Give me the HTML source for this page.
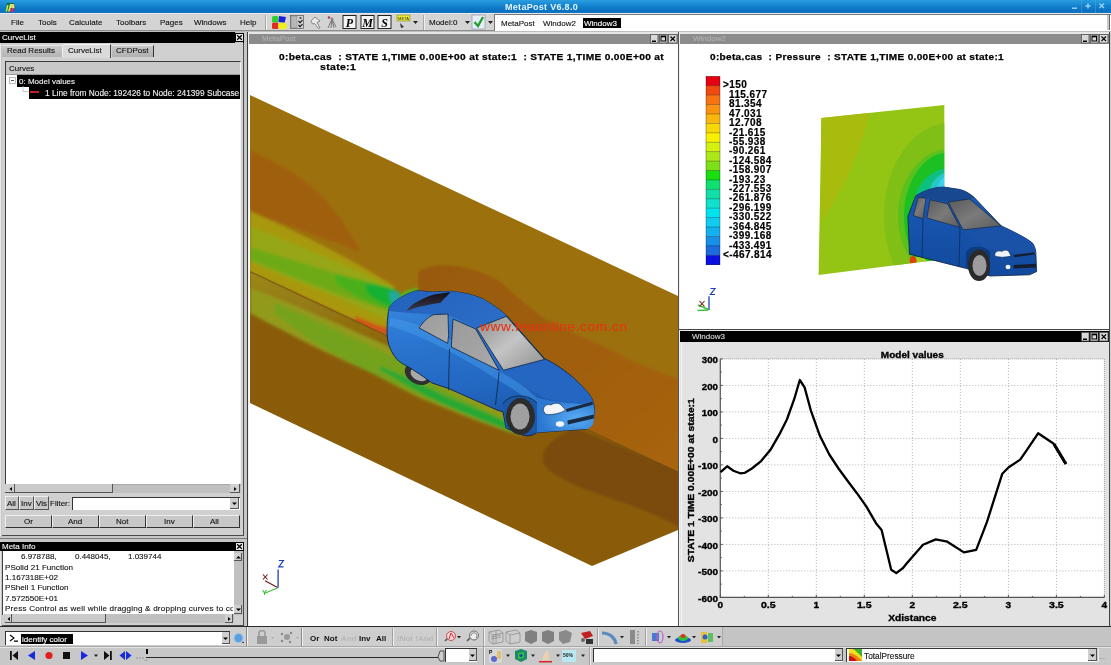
<!DOCTYPE html>
<html><head><meta charset="utf-8">
<style>
*{margin:0;padding:0;box-sizing:border-box}
html,body{width:1111px;height:665px;overflow:hidden;background:#c4c4c4;font-family:"Liberation Sans",sans-serif;font-size:8px;color:#000;position:relative}
.a{position:absolute}
.t{position:absolute;white-space:nowrap;line-height:1;will-change:transform}
svg{will-change:transform}
</style></head><body>
<div class="a" style="left:0px;top:0px;width:1111px;height:13px;background:linear-gradient(#2a9ee0,#1382cf 45%,#0a6fbf 85%,#0f78c4)"></div>
<svg class="a" style="left:4px;top:2px" width="12" height="11" viewBox="0 0 12 11"><path d="M1,10 L3,1 L10,1 L11,6 L9,10Z" fill="#1a6a40"/><path d="M1.5,9.5 L3,3 L4.5,3 L3.2,9.5Z" fill="#b0f070"/><path d="M4,9.5 L6,2 L8.5,2 L7,7 L5.5,9.5Z" fill="#d8f060"/><path d="M7,7 L8.5,2 L10,2 L10.5,6Z" fill="#f0e080"/><path d="M5.5,10 L7,7 L10.5,6 L9.5,10Z" fill="#c03080"/><path d="M6,6.5 L8,6 L7.5,8Z" fill="#a01010"/></svg>
<div class="t" style="left:504.6px;top:2.56px;font-size:9px;color:#e2f5ff;font-weight:bold;letter-spacing:0.3px;">MetaPost V6.8.0</div>
<svg class="a" style="left:1066px;top:0px" width="45" height="13" viewBox="0 0 45 13"><rect x="15" y="0" width="1" height="13" fill="#4aa8e0" opacity="0.5"/><rect x="29" y="0" width="1" height="13" fill="#4aa8e0" opacity="0.5"/><rect x="6" y="7.5" width="5" height="1.4" fill="#9cd4f6"/><path d="M22,3.5 L22,8.5 M19.5,6 L24.5,6" stroke="#9cd4f6" stroke-width="1.4"/><path d="M33.5,3.5 L38,8 M38,3.5 L33.5,8" stroke="#9cd4f6" stroke-width="1.2"/></svg>
<div class="a" style="left:0px;top:13px;width:1111px;height:18px;background:#d4d4d4"></div>
<div class="a" style="left:0px;top:13px;width:1111px;height:1px;background:#e8e8e8"></div>
<div class="a" style="left:0px;top:30px;width:1111px;height:1px;background:#8c8c8c"></div>
<div class="a" style="left:0px;top:31px;width:1111px;height:1px;background:#bdbdbd"></div>
<div class="t" style="left:11px;top:18.92px;font-size:8px;color:#111;-webkit-text-stroke:0.12px #111;">File</div>
<div class="t" style="left:38px;top:18.92px;font-size:8px;color:#111;-webkit-text-stroke:0.12px #111;">Tools</div>
<div class="t" style="left:69px;top:18.92px;font-size:8px;color:#111;-webkit-text-stroke:0.12px #111;">Calculate</div>
<div class="t" style="left:116px;top:18.92px;font-size:8px;color:#111;-webkit-text-stroke:0.12px #111;">Toolbars</div>
<div class="t" style="left:160px;top:18.92px;font-size:8px;color:#111;-webkit-text-stroke:0.12px #111;">Pages</div>
<div class="t" style="left:194px;top:18.92px;font-size:8px;color:#111;-webkit-text-stroke:0.12px #111;">Windows</div>
<div class="t" style="left:240px;top:18.92px;font-size:8px;color:#111;-webkit-text-stroke:0.12px #111;">Help</div>
<div class="a" style="left:265px;top:15px;width:1px;height:15px;background:#a8a8a8"></div>
<div class="a" style="left:266px;top:15px;width:1px;height:15px;background:#f0f0f0"></div>
<svg class="a" style="left:266px;top:13px" width="230" height="18" viewBox="266 13 230 18">
<rect x="272" y="16" width="6.5" height="6.5" rx="1.5" fill="#30d030"/>
<path d="M279,16 L286,17 L284.5,23 L278.5,22 Z" fill="#2020d8"/>
<rect x="272" y="22.5" width="6.5" height="6.5" rx="1.5" fill="#e03020"/>
<ellipse cx="282.5" cy="26" rx="4.5" ry="3.5" fill="#f0f020"/>
<rect x="290.5" y="15.5" width="13" height="13" fill="#d0d0d0" stroke="#555" stroke-width="0.7"/>
<rect x="291.5" y="16.5" width="5.5" height="11" fill="#b8b8b8" stroke="#888" stroke-width="0.5"/>
<circle cx="300.5" cy="18" r="1" fill="#333"/>
<path d="M298.5,21 l1.5,1.6 l2.5,-2.4 M298.5,25 l1.5,1.6 l2.5,-2.4" stroke="#111" stroke-width="1.1" fill="none"/>
<path d="M311,21 L315,17 L320,21 L317,22.5 L320,28 L318.5,28.5 L314.5,23.5 L312.5,24 Z" fill="#e8e8e8" stroke="#666" stroke-width="0.7"/>
<circle cx="329" cy="17.5" r="1.3" fill="#b04050"/>
<path d="M332,19 L328,28 M332,19 L331,28 M332,19 L334,28 M332,19 L336,27" stroke="#777" stroke-width="1" fill="none"/>
<circle cx="332" cy="19" r="1.5" fill="#888"/>
<rect x="343" y="15.5" width="13" height="13" fill="#f4f4f4" stroke="#222" stroke-width="1"/>
<rect x="361" y="15.5" width="13" height="13" fill="#f4f4f4" stroke="#222" stroke-width="1"/>
<rect x="378" y="15.5" width="13" height="13" fill="#f4f4f4" stroke="#222" stroke-width="1"/>
<text x="349.5" y="26.5" text-anchor="middle" font-family="Liberation Serif" font-style="italic" font-weight="bold" font-size="12">P</text>
<text x="367.5" y="26.5" text-anchor="middle" font-family="Liberation Serif" font-style="italic" font-weight="bold" font-size="12">M</text>
<text x="384.5" y="26.5" text-anchor="middle" font-family="Liberation Serif" font-style="italic" font-weight="bold" font-size="12">S</text>
<rect x="397" y="15" width="13" height="6" fill="#e8e830" stroke="#707020" stroke-width="0.5"/>
<text x="403.5" y="20" text-anchor="middle" font-family="Liberation Sans" font-size="4" fill="#333">META</text>
<path d="M400,23 L404,27 L401,28Z" fill="#333"/>
<path d="M413,21 L418,21 L415.5,24Z" fill="#222"/>
<path d="M465,21 L470,21 L467.5,24Z" fill="#222"/>
<rect x="472" y="15" width="13" height="14" fill="#e8eef8" stroke="#7a8aa0" stroke-width="0.6"/>
<path d="M474.5,22 L478,26 L483,17" stroke="#20a030" stroke-width="2.4" fill="none"/>
<path d="M488,21 L493,21 L490.5,24Z" fill="#222"/>
</svg>
<div class="a" style="left:423px;top:15px;width:1px;height:15px;background:#a8a8a8"></div>
<div class="a" style="left:424px;top:15px;width:1px;height:15px;background:#f0f0f0"></div>
<div class="t" style="left:429px;top:19.22px;font-size:8px;color:#111;-webkit-text-stroke:0.12px #111;">Model:0</div>
<div class="a" style="left:494px;top:14px;width:617px;height:17px;background:#fff;border-top:1px solid #777;border-left:1px solid #777"></div>
<div class="a" style="left:1107px;top:15px;width:3px;height:15px;background:#c8c8c8;border-right:1px solid #666"></div>
<div class="t" style="left:501px;top:19.72px;font-size:8px;color:#111;-webkit-text-stroke:0.12px #111;">MetaPost</div>
<div class="t" style="left:543px;top:19.72px;font-size:8px;color:#111;-webkit-text-stroke:0.12px #111;">Window2</div>
<div class="a" style="left:583px;top:17.5px;width:38px;height:10px;background:#000"></div>
<div class="t" style="left:584px;top:19.72px;font-size:8px;color:#fff;-webkit-text-stroke:0.12px #fff;">Window3</div>
<div class="a" style="left:0px;top:32px;width:247px;height:595px;background:#c6c6c6"></div>
<div class="a" style="left:0px;top:32px;width:1px;height:595px;background:#e8e8e8"></div>
<div class="a" style="left:0px;top:32px;width:235px;height:10.5px;background:#000"></div>
<div class="t" style="left:2px;top:33.62px;font-size:8px;color:#f4f4f4;-webkit-text-stroke:0.12px #f4f4f4;">CurveList</div>
<svg class="a" style="left:235px;top:33px" width="9" height="9" viewBox="0 0 9 9"><rect x="0.5" y="0.5" width="8" height="8" fill="#e8e8e8" stroke="#000"/><path d="M2.2,2.2 L6.8,6.8 M6.8,2.2 L2.2,6.8" stroke="#000" stroke-width="1.3"/></svg>
<div class="a" style="left:2px;top:42.5px;width:242px;height:493px;background:#d0d0d0;border-right:1px solid #4a4a4a;border-bottom:1px solid #4a4a4a"></div>
<div class="a" style="left:243px;top:33px;width:1px;height:10px;background:#000"></div>
<div class="a" style="left:2px;top:45px;width:61px;height:12px;background:linear-gradient(#cacaca,#b4b4b4);border-right:1px solid #f0f0f0;border-top:1px solid #e8e8e8"></div>
<div class="a" style="left:63px;top:43.5px;width:48px;height:14px;background:#dadada;border-right:1px solid #404040;border-top:1px solid #f4f4f4"></div>
<div class="a" style="left:112px;top:45px;width:42px;height:12px;background:linear-gradient(#c6c6c6,#b0b0b0);border-right:1px solid #303030;border-top:1px solid #e8e8e8"></div>
<div class="t" style="left:7px;top:47.02px;font-size:8px;color:#111;-webkit-text-stroke:0.12px #111;">Read Results</div>
<div class="t" style="left:68px;top:47.02px;font-size:8px;color:#111;-webkit-text-stroke:0.12px #111;">CurveList</div>
<div class="t" style="left:116px;top:47.02px;font-size:8px;color:#111;-webkit-text-stroke:0.12px #111;">CFDPost</div>
<div class="a" style="left:5px;top:61px;width:236px;height:424px;background:#fff;border-top:1px solid #3a3a3a;border-left:1px solid #3a3a3a;border-right:1px solid #f0f0f0"></div>
<div class="a" style="left:6px;top:62px;width:234px;height:13px;background:#c8c8c8;border-bottom:1px solid #9a9a9a"></div>
<div class="t" style="left:9px;top:65.02px;font-size:8px;color:#111;-webkit-text-stroke:0.12px #111;">Curves</div>
<div class="a" style="left:17px;top:75px;width:223px;height:11.5px;background:#000"></div>
<div class="t" style="left:19px;top:77.92px;font-size:8px;color:#f0f0f0;-webkit-text-stroke:0.12px #f0f0f0;">0: Model values</div>
<div class="a" style="left:29px;top:86.5px;width:211px;height:12px;background:#000"></div>
<div class="t" style="left:44.6px;top:89.09px;font-size:8.3px;color:#f0f0f0;-webkit-text-stroke:0.12px #f0f0f0;">1 Line from Node: 192426 to Node: 241399 Subcase</div>
<svg class="a" style="left:8px;top:76px" width="25" height="18" viewBox="8 76 25 18"><rect x="9.5" y="77.5" width="6" height="6" fill="#fff" stroke="#aaa" stroke-width="0.8"/><path d="M11,80.5 H14" stroke="#555" stroke-width="1"/><path d="M23,86 V91.5 H29" stroke="#bbb" stroke-width="0.8" fill="none"/></svg>
<div class="a" style="left:30px;top:91px;width:9px;height:1.6px;background:#c02020"></div>
<div class="a" style="left:5px;top:484px;width:236px;height:9px;background:#c0c0c0;border-top:1px solid #aaa"></div>
<div class="a" style="left:5px;top:484px;width:10px;height:9px;background:#d0d0d0;border-right:1px solid #555;border-bottom:1px solid #555"></div>
<svg class="a" style="left:8px;top:486px" width="6" height="6"><path d="M4,1 L1.5,3 L4,5Z" fill="#000"/></svg>
<div class="a" style="left:15px;top:484px;width:98px;height:9px;background:#cacaca;border-right:1px solid #555;border-bottom:1px solid #555"></div>
<div class="a" style="left:230px;top:484px;width:10px;height:9px;background:#d0d0d0;border-right:1px solid #555;border-bottom:1px solid #555"></div>
<svg class="a" style="left:232px;top:486px" width="6" height="6"><path d="M2,1 L4.5,3 L2,5Z" fill="#000"/></svg>
<div class="a" style="left:5px;top:496px;width:14px;height:14px;background:#c8c8c8;border-right:1px solid #555;border-bottom:1px solid #555;border-top:1px solid #eee;border-left:1px solid #eee"></div>
<div class="t" style="left:7px;top:500.22px;font-size:8px;color:#111;-webkit-text-stroke:0.12px #111;">All</div>
<div class="a" style="left:19px;top:496px;width:15px;height:14px;background:#c8c8c8;border-right:1px solid #555;border-bottom:1px solid #555;border-top:1px solid #eee;border-left:1px solid #eee"></div>
<div class="t" style="left:21px;top:500.22px;font-size:8px;color:#111;-webkit-text-stroke:0.12px #111;">Inv</div>
<div class="a" style="left:34px;top:496px;width:15px;height:14px;background:#c8c8c8;border-right:1px solid #555;border-bottom:1px solid #555;border-top:1px solid #eee;border-left:1px solid #eee"></div>
<div class="t" style="left:36px;top:500.22px;font-size:8px;color:#111;-webkit-text-stroke:0.12px #111;">Vis</div>
<div class="t" style="left:49.5px;top:500.22px;font-size:8px;color:#111;-webkit-text-stroke:0.12px #111;">Filter:</div>
<div class="a" style="left:72px;top:497px;width:168px;height:13px;background:#fff;border-top:1px solid #333;border-left:1px solid #333"></div>
<div class="a" style="left:230px;top:498px;width:9px;height:11px;background:#cfcfcf;border-right:1px solid #555;border-bottom:1px solid #555"></div>
<svg class="a" style="left:231px;top:500px" width="7" height="7"><path d="M1,2.5 L6,2.5 L3.5,5Z" fill="#000"/></svg>
<div class="a" style="left:5px;top:515px;width:47px;height:13px;background:#c8c8c8;border-right:1px solid #333;border-bottom:1px solid #333;border-top:1px solid #eee;border-left:1px solid #eee"></div>
<div class="t" style="left:23.5px;top:518.42px;font-size:8px;color:#111;-webkit-text-stroke:0.12px #111;">Or</div>
<div class="a" style="left:52px;top:515px;width:47px;height:13px;background:#c8c8c8;border-right:1px solid #333;border-bottom:1px solid #333;border-top:1px solid #eee;border-left:1px solid #eee"></div>
<div class="t" style="left:68px;top:518.42px;font-size:8px;color:#111;-webkit-text-stroke:0.12px #111;">And</div>
<div class="a" style="left:99px;top:515px;width:47px;height:13px;background:#c8c8c8;border-right:1px solid #333;border-bottom:1px solid #333;border-top:1px solid #eee;border-left:1px solid #eee"></div>
<div class="t" style="left:116px;top:518.42px;font-size:8px;color:#111;-webkit-text-stroke:0.12px #111;">Not</div>
<div class="a" style="left:146px;top:515px;width:47px;height:13px;background:#c8c8c8;border-right:1px solid #333;border-bottom:1px solid #333;border-top:1px solid #eee;border-left:1px solid #eee"></div>
<div class="t" style="left:163.5px;top:518.42px;font-size:8px;color:#111;-webkit-text-stroke:0.12px #111;">Inv</div>
<div class="a" style="left:193px;top:515px;width:47px;height:13px;background:#c8c8c8;border-right:1px solid #333;border-bottom:1px solid #333;border-top:1px solid #eee;border-left:1px solid #eee"></div>
<div class="t" style="left:210px;top:518.42px;font-size:8px;color:#111;-webkit-text-stroke:0.12px #111;">All</div>
<div class="a" style="left:0px;top:535.5px;width:247px;height:5px;background:#c6c6c6"></div>
<div class="a" style="left:0px;top:538px;width:247px;height:1px;background:#7a7a7a"></div>
<div class="a" style="left:0px;top:541.5px;width:235px;height:9.5px;background:#000"></div>
<div class="t" style="left:2px;top:542.92px;font-size:8px;color:#f4f4f4;-webkit-text-stroke:0.12px #f4f4f4;">Meta Info</div>
<svg class="a" style="left:235px;top:542px" width="9" height="9" viewBox="0 0 9 9"><rect x="0.5" y="0.5" width="8" height="8" fill="#e8e8e8" stroke="#000"/><path d="M2.2,2.2 L6.8,6.8 M6.8,2.2 L2.2,6.8" stroke="#000" stroke-width="1.3"/></svg>
<div class="a" style="left:2px;top:551px;width:242px;height:75px;background:#d0d0d0;border-right:1px solid #4a4a4a;border-bottom:1px solid #4a4a4a"></div>
<div class="a" style="left:2px;top:551px;width:232px;height:64px;background:#fff;border-left:1px solid #444"></div>
<div class="a" style="left:234px;top:551px;width:9px;height:64px;background:#c0c0c0"></div>
<div class="a" style="left:234px;top:553px;width:8px;height:8px;background:#d0d0d0;border-right:1px solid #555;border-bottom:1px solid #555"></div>
<svg class="a" style="left:235px;top:554px" width="7" height="7"><path d="M1,4.5 L6,4.5 L3.5,2Z" fill="#000"/></svg>
<div class="a" style="left:234px;top:605px;width:8px;height:9px;background:#d0d0d0;border-right:1px solid #555;border-bottom:1px solid #555"></div>
<svg class="a" style="left:235px;top:606px" width="7" height="7"><path d="M1,2.5 L6,2.5 L3.5,5Z" fill="#000"/></svg>
<div class="t" style="left:21px;top:552.92px;font-size:8px;color:#111;-webkit-text-stroke:0.12px #111;">6.978788,</div>
<div class="t" style="left:74.6px;top:552.92px;font-size:8px;color:#111;-webkit-text-stroke:0.12px #111;">0.448045,</div>
<div class="t" style="left:128px;top:552.92px;font-size:8px;color:#111;-webkit-text-stroke:0.12px #111;">1.039744</div>
<div class="t" style="left:5px;top:563.74px;font-size:8.1px;color:#111;-webkit-text-stroke:0.12px #111;">PSolid 21 Function</div>
<div class="t" style="left:5px;top:574.09px;font-size:8.1px;color:#111;-webkit-text-stroke:0.12px #111;">1.167318E+02</div>
<div class="t" style="left:5px;top:584.44px;font-size:8.1px;color:#111;-webkit-text-stroke:0.12px #111;">PShell 1 Function</div>
<div class="t" style="left:5px;top:594.79px;font-size:8.1px;color:#111;-webkit-text-stroke:0.12px #111;">7.572550E+01</div>
<div class="a" style="left:4px;top:600px;width:229px;height:14px;overflow:hidden">
<div class="t" style="left:1px;top:4.64px;font-size:8.1px;color:#111;letter-spacing:0.2px;-webkit-text-stroke:0.12px #111;">Press Control as well while dragging &amp; dropping curves to combine</div>
</div>
<div class="a" style="left:4px;top:614px;width:230px;height:9px;background:#c0c0c0"></div>
<div class="a" style="left:5px;top:614px;width:7px;height:9px;background:#d0d0d0;border-right:1px solid #555;border-bottom:1px solid #555"></div>
<svg class="a" style="left:6px;top:616px" width="6" height="6"><path d="M4,1 L1.5,3 L4,5Z" fill="#000"/></svg>
<div class="a" style="left:12px;top:614px;width:94px;height:9px;background:#cacaca;border-right:1px solid #555;border-bottom:1px solid #555"></div>
<div class="a" style="left:225px;top:614px;width:8px;height:9px;background:#d0d0d0;border-right:1px solid #555;border-bottom:1px solid #555"></div>
<svg class="a" style="left:226px;top:616px" width="6" height="6"><path d="M2,1 L4.5,3 L2,5Z" fill="#000"/></svg>
<div class="a" style="left:247px;top:32px;width:433px;height:595px;background:#cfcfcf"></div>
<div class="a" style="left:247px;top:32px;width:1px;height:595px;background:#3a3a3a"></div>
<div class="a" style="left:248px;top:32px;width:1px;height:595px;background:#f0f0f0"></div>
<div class="a" style="left:678px;top:32px;width:1px;height:595px;background:#555"></div>
<div class="a" style="left:249px;top:32px;width:429px;height:2px;background:#e6e6e6"></div>
<div class="a" style="left:249px;top:34px;width:429px;height:10px;background:#8c8c8c"></div>
<div class="t" style="left:262px;top:35.42px;font-size:8px;color:#b0b0b0;-webkit-text-stroke:0.12px #b0b0b0;">MetaPost</div>
<svg class="a" style="left:650px;top:34px" width="28" height="10" viewBox="0 0 28 10"><rect x="0.5" y="0.5" width="7.5" height="8.5" fill="#d8d8d8" stroke="#555" stroke-width="0.8"/><rect x="2" y="6.5" width="4" height="1.5" fill="#000"/><rect x="9.5" y="0.5" width="7.5" height="8.5" fill="#d8d8d8" stroke="#555" stroke-width="0.8"/><rect x="11" y="2" width="4.5" height="5" fill="none" stroke="#000" stroke-width="1"/><rect x="11" y="2" width="4.5" height="1.3" fill="#000"/><rect x="18.5" y="0.5" width="8.5" height="8.5" fill="#d8d8d8" stroke="#555" stroke-width="0.8"/><path d="M20.5,2.5 L25,7 M25,2.5 L20.5,7" stroke="#000" stroke-width="1.1"/></svg>
<div class="a" style="left:249px;top:44px;width:429px;height:582px;background:#fff"></div>
<svg class="a" style="left:250px;top:44px" width="428" height="582" viewBox="250 44 428 582">
<defs>
<clipPath id="cpUp"><polygon points="250,94.9 678,296 678,472 250,271.5"/></clipPath>
<clipPath id="cpDn"><polygon points="250,271.5 678,472 678,530 592,566 250,403"/></clipPath>
<filter id="bl2" x="-20%" y="-20%" width="140%" height="140%"><feGaussianBlur stdDeviation="1.6"/></filter>
<filter id="bl1" x="-20%" y="-20%" width="140%" height="140%"><feGaussianBlur stdDeviation="0.8"/></filter>
<linearGradient id="orgG" x1="0" y1="0" x2="1" y2="1"><stop offset="0" stop-color="#985a0c"/><stop offset="0.6" stop-color="#a2600c"/><stop offset="1" stop-color="#a8640a"/></linearGradient>
<filter id="bl3" x="-20%" y="-20%" width="140%" height="140%"><feGaussianBlur stdDeviation="3"/></filter>
<linearGradient id="carSide" x1="0" y1="0" x2="0" y2="1"><stop offset="0" stop-color="#3a8ae0"/><stop offset="0.35" stop-color="#2a74cc"/><stop offset="0.8" stop-color="#2064bc"/><stop offset="1" stop-color="#1650a0"/></linearGradient>
<linearGradient id="glass" x1="0" y1="0" x2="1" y2="1"><stop offset="0" stop-color="#8a8a8a"/><stop offset="0.55" stop-color="#b8b8b8"/><stop offset="1" stop-color="#8c8c8c"/></linearGradient>
<linearGradient id="hoodG" x1="0" y1="0" x2="1" y2="1"><stop offset="0" stop-color="#2262be"/><stop offset="0.7" stop-color="#2a6ecc"/><stop offset="1" stop-color="#4a9cec"/></linearGradient>
<linearGradient id="ridgeG" x1="0" y1="0" x2="0" y2="1"><stop offset="0" stop-color="#9c8a18"/><stop offset="1" stop-color="#8a620c"/></linearGradient>
</defs>
<!-- upper face -->
<polygon points="250,94.9 678,296 678,472 250,271.5" fill="#9d700e"/>
<g clip-path="url(#cpUp)">
 <g filter="url(#bl2)">
  <path d="M250,150 C270,160 286,168 300,178 C325,195 345,222 361,252 C330,240 290,225 250,213 Z" fill="#a05e0a"/>
  
  
  
  <path d="M250,211 C300,233 350,258 394,286 L392,336 L250,272 Z" fill="#a89810"/>
  <path d="M250,226 C300,246 350,266 394,288 L392,322 C350,302 300,284 250,262 Z" fill="#96a612"/>
  <path d="M250,247 C300,262 350,278 394,290 L394,312 C350,300 300,280 250,260 Z" fill="#6eaa14"/>
  <path d="M335,274 C360,280 380,284 396,290 L396,312 C375,306 355,296 335,283 Z" fill="#48b01c"/>
  <path d="M366,284 C378,284 390,288 398,292 L398,308 C386,306 374,300 366,291 Z" fill="#12b030"/>
  <path d="M300,291 C330,306 360,320 390,331 L390,336 L300,294 Z" fill="#b09c10"/>
  <path d="M355,316 C370,322 380,326 391,329 L391,336 C375,333 364,329 355,324 Z" fill="#d05412"/>
 </g>

 <path d="M398,296 C405,290 415,287 430,286.5 C445,286 458,287 470,290 L468,295 C455,292 440,291 425,292 C412,294 404,297 400,301 Z" fill="#58b41a" filter="url(#bl1)"/>
 <path d="M388,292 C392,290 396,291 400,293 L398,318 C394,312 390,300 388,292 Z" fill="#20a8a0" filter="url(#bl2)"/>
 <path d="M418,272 C425,266 440,264 456,266 C470,268 488,274 499,281 C510,290 525,305 541,316 C555,324 565,330 580,336 C600,344 615,352 630,360 C645,366 660,372 680,380 L680,480 L560,420 L520,330 L460,300 L418,292 Z" fill="url(#orgG)" filter="url(#bl1)"/>
</g>
<!-- lower face -->
<polygon points="250,271.5 678,472 678,530 592,566 250,403" fill="#8a5c0a"/>
<g clip-path="url(#cpDn)">
 <g filter="url(#bl2)">
  <path d="M250,271 L392,338 L392,352 C340,330 290,310 250,292 Z" fill="url(#ridgeG)"/>
  <path d="M250,288 C290,302 340,325 392,348 C410,358 425,366 436,372 C460,384 490,398 505,405 L522,436 C500,430 470,418 420,398 C400,388 385,380 370,372 C330,355 290,335 250,313 Z" fill="#929a1a"/>
  <path d="M275,303 C310,318 350,336 400,360 C415,370 425,380 436,385 C460,398 490,412 512,422 L518,434 C490,425 460,412 420,396 C390,382 360,368 330,352 C310,340 290,325 275,314 Z" fill="#74a21a"/>
  <path d="M380,366 C400,374 425,386 450,398 C480,410 500,418 510,424 L514,432 C490,424 460,412 430,398 C410,388 395,378 380,370 Z" fill="#28a832"/>
 </g>
 <path d="M575,428 C555,436 538,450 544,464 C552,478 590,492 630,505 C650,512 665,520 680,527 L680,471 Z" fill="#7a4c0a" filter="url(#bl1)"/>
</g>
<line x1="250" y1="271.5" x2="678" y2="472" stroke="#5a3c08" stroke-width="0.6"/>
<g id="car1">
  <defs>
  <linearGradient id="sideG" x1="0" y1="0" x2="0.25" y2="1"><stop offset="0" stop-color="#3c8ce2"/><stop offset="0.3" stop-color="#2c78d2"/><stop offset="0.75" stop-color="#2266c0"/><stop offset="1" stop-color="#1a54a6"/></linearGradient>
  <linearGradient id="roofG" x1="0" y1="0" x2="1" y2="0.5"><stop offset="0" stop-color="#2462bc"/><stop offset="1" stop-color="#2a6cc6"/></linearGradient>
  <linearGradient id="glassW" x1="0" y1="0" x2="1" y2="1"><stop offset="0" stop-color="#8c8c8c"/><stop offset="0.5" stop-color="#c4c4c4"/><stop offset="1" stop-color="#909090"/></linearGradient>
  <linearGradient id="glassS" x1="0" y1="0" x2="1" y2="1"><stop offset="0" stop-color="#9a9a9a"/><stop offset="1" stop-color="#aaaaaa"/></linearGradient>
  <linearGradient id="spoG" x1="0" y1="0" x2="0" y2="1"><stop offset="0" stop-color="#141018"/><stop offset="1" stop-color="#3a3848"/></linearGradient>
  <radialGradient id="frontG" cx="0.7" cy="0.6" r="0.6"><stop offset="0" stop-color="#5aacf4"/><stop offset="1" stop-color="#2a78d0"/></radialGradient>
  </defs>
  <!-- rear wheel -->
  <ellipse cx="418" cy="374" rx="14" ry="10" fill="#303030" transform="rotate(28 418 374)"/>
  <ellipse cx="419" cy="374.5" rx="9" ry="6" fill="#a8a8a8" transform="rotate(28 419 374.5)"/>
  <!-- body silhouette -->
  <path d="M389.4,307 C395,300 405,294 416.5,290.7 C422,291 428,291.8 433,292 L450.5,291.3 C458,292 463,293 468,293.9 C476,296 482,298 487,301.4 C495,306 500,310 506.3,315.3 L544.5,358.5 C560,366 576,378 589,394 C593,399 595,406 594.5,414 C594,421 591,427 586,429 L537,432.5 C533,436 526,437 520,434 L506,428 L503,412 L497,410 L448.6,388.5 L432,383 C424,377 414,370 405,365 C401,363 399,361 397,359.5 C391,352 388,345 387.2,336 C386.8,325 387.5,315 389,309 Z" fill="url(#sideG)" stroke="#0e2240" stroke-width="0.9"/>
  <!-- roof / trunk top -->
  <path d="M389.4,307 C395,300 405,294 416.5,290.7 C422,291 428,291.8 433,292 L450.5,291.3 C458,292 463,293 468,293.9 C476,296 482,298 487,301.4 C495,306 500,310 506.3,315.3 L476.5,328 C465,322 455,318 450,316 L434,314.5 C420,314 405,313 389.4,311 Z" fill="url(#roofG)"/>
  <!-- hood -->
  <path d="M503.5,370.2 L544.5,359.4 C560,367 576,378 589,394 C592,398 593,401 593.5,404 C580,404 560,402 545,398 C530,390 515,380 503.5,370.2 Z" fill="#2466c2"/>
  <!-- front bumper highlight -->
  <path d="M537,398 C555,402 575,404 593.5,404 C595,410 595,418 593,424 C591,428 588,429 586,429 L537,432.5 C532,420 532,406 537,398 Z" fill="url(#frontG)"/>
  <!-- shoulder highlight -->
  <path d="M390,318 C420,322 460,340 500,372 C520,382 530,392 537,398 L534,404 C520,394 505,384 495,378 C460,356 420,334 389,326 Z" fill="#48a0ee" opacity="0.45"/>
  <!-- spoiler -->
  <path d="M406.4,310.9 C410,306 414,303 417.8,301.4 C424,298 429,296 434,294.5 L450.5,292 C447,296 444,299 440.5,302.7 C432,304 425,305.5 417.8,307 Z" fill="url(#spoG)"/>
  <!-- windows -->
  <path d="M419,327.9 C424,321 429,316 434,314.6 L448,314 L448.6,335.4 L447.7,343.3 Z" fill="url(#glassS)" stroke="#0e2240" stroke-width="0.8"/>
  <path d="M453,319 L475.6,328.9 L499.1,370.4 L451.3,347 Z" fill="url(#glassS)" stroke="#0e2240" stroke-width="0.8"/>
  <path d="M476.5,328 L506.3,316.3 L544.5,359.4 L503.5,370.2 Z" fill="url(#glassW)" stroke="#0e2240" stroke-width="0.8"/>
  <!-- door lines -->
  <path d="M449.5,348.8 C449,365 448.8,378 448.6,390.2" fill="none" stroke="#0e2240" stroke-width="0.8"/>
  <path d="M499,372 C498,385 496.5,395 495.5,405" fill="none" stroke="#0e2240" stroke-width="0.8"/>
  <!-- front wheel arch + wheel -->
  <path d="M503,404 C508,394 528,393 537,403 L537,433 L506,428 Z" fill="#1c58a8"/><path d="M503,404 C508,394 528,393 537,403" fill="none" stroke="#0e2240" stroke-width="0.8"/>
  <ellipse cx="520.5" cy="416.5" rx="14.5" ry="18.5" fill="#2c2c2c"/>
  <ellipse cx="520" cy="416.5" rx="9.5" ry="13" fill="#a0a0a0"/>
  <!-- lights -->
  <path d="M543.4,411 C543,406 547,403.5 551,405 C554,402.5 560,402.5 562,406 L565.5,410 C560,414 550,415 546,414.5 Z" fill="#f2f6fa" stroke="#0e2240" stroke-width="0.6"/>
  <path d="M566,409 L592.3,401.7 L592.8,404.7 L566.5,412 Z" fill="#1a2a40"/>
  <path d="M567.4,420.5 L593.8,414.5 L593.8,418.5 L567.9,424.5 Z" fill="#1a2a40"/>
  <ellipse cx="560" cy="424" rx="4.2" ry="2.8" fill="#f2f6fa"/>
</g>

</svg>

<div class="t" style="left:278.8px;top:52.88px;font-size:9.1px;color:#000;font-weight:bold;letter-spacing:0.3px;-webkit-text-stroke:0.25px #000;;transform-origin:0 0;transform:scaleX(1.1160)">0:beta.cas&nbsp; : STATE 1,TIME 0.00E+00 at state:1&nbsp; : STATE 1,TIME 0.00E+00 at</div>
<div class="t" style="left:320.2px;top:63.18px;font-size:9.1px;color:#000;font-weight:bold;letter-spacing:0.3px;-webkit-text-stroke:0.25px #000;;transform-origin:0 0;transform:scaleX(1.1489)">state:1</div>
<div class="t" style="left:480px;top:320.02px;font-size:13px;color:#e63414;letter-spacing:0.5px;-webkit-text-stroke:0.12px #e63414;;transform-origin:0 0;transform:scaleX(1.0593)">www.feaonline.com.cn</div>
<svg class="a" style="left:258px;top:556px" width="30" height="42" viewBox="258 556 30 42">
<path d="M278.1,569.5 V587.8" stroke="#2040b0" stroke-width="1.3"/>
<path d="M278.8,560.5 h4.6 l-4.6,6.3 h4.8" stroke="#2040b0" stroke-width="1.2" fill="none"/>
<path d="M277.5,587.5 L265,580.8" stroke="#701818" stroke-width="1.2"/>
<path d="M263,574.5 l4.5,5 M267.5,574.5 l-4.5,5" stroke="#701818" stroke-width="1.1"/>
<path d="M277.5,588 L264,593.5" stroke="#40c040" stroke-width="1.2"/>
<path d="M262.5,590 l2,3 l2,-3 M264.5,593 v2" stroke="#40c040" stroke-width="1.1" fill="none"/>
</svg>
<div class="a" style="left:679px;top:32px;width:432px;height:298px;background:#cfcfcf"></div>
<div class="a" style="left:679px;top:32px;width:1px;height:298px;background:#f0f0f0"></div>
<div class="a" style="left:1109px;top:32px;width:1px;height:298px;background:#444"></div>
<div class="a" style="left:680px;top:32px;width:429px;height:2px;background:#e6e6e6"></div>
<div class="a" style="left:680px;top:34px;width:429px;height:10px;background:#8c8c8c"></div>
<div class="t" style="left:693px;top:35.42px;font-size:8px;color:#b0b0b0;-webkit-text-stroke:0.12px #b0b0b0;">Window2</div>
<svg class="a" style="left:1081px;top:34px" width="28" height="10" viewBox="0 0 28 10"><rect x="0.5" y="0.5" width="7.5" height="8.5" fill="#d8d8d8" stroke="#555" stroke-width="0.8"/><rect x="2" y="6.5" width="4" height="1.5" fill="#000"/><rect x="9.5" y="0.5" width="7.5" height="8.5" fill="#d8d8d8" stroke="#555" stroke-width="0.8"/><rect x="11" y="2" width="4.5" height="5" fill="none" stroke="#000" stroke-width="1"/><rect x="11" y="2" width="4.5" height="1.3" fill="#000"/><rect x="18.5" y="0.5" width="8.5" height="8.5" fill="#d8d8d8" stroke="#555" stroke-width="0.8"/><path d="M20.5,2.5 L25,7 M25,2.5 L20.5,7" stroke="#000" stroke-width="1.1"/></svg>
<div class="a" style="left:680px;top:44px;width:429px;height:285px;background:#fff"></div>
<svg class="a" style="left:681px;top:44px" width="427" height="285" viewBox="681 44 427 285">
<defs>
<clipPath id="cpW2"><polygon points="821.4,117.9 944.3,105 944.3,259 818.6,275"/></clipPath>
<filter id="bl2b" x="-10%" y="-10%" width="120%" height="120%"><feGaussianBlur stdDeviation="0.5"/></filter>
<linearGradient id="glass2" x1="0" y1="0" x2="1" y2="1"><stop offset="0" stop-color="#5a5a5a"/><stop offset="0.5" stop-color="#7a7a7a"/><stop offset="1" stop-color="#5c5c5c"/></linearGradient>
<linearGradient id="carSide2" x1="0" y1="0" x2="0" y2="1"><stop offset="0" stop-color="#1a5ab8"/><stop offset="1" stop-color="#124a9c"/></linearGradient>
</defs>
<polygon points="821.4,117.9 944.3,105 944.3,259 818.6,275" fill="#94c414"/>
<g clip-path="url(#cpW2)" filter="url(#bl2b)">
  <path d="M821,100 L872,100 C865,140 850,180 821,222 Z" fill="#a8bc10"/>
  <ellipse cx="950" cy="216" rx="66" ry="93" fill="#80c018"/>
  <ellipse cx="950" cy="216" rx="52" ry="67" fill="#5cc01c"/>
  <ellipse cx="950" cy="216" rx="46" ry="64" fill="#1cc024"/>
  <ellipse cx="950" cy="214" rx="38" ry="46" fill="#10c080"/>
  <ellipse cx="950" cy="200" rx="22" ry="28" fill="#28c8c8"/>
  <ellipse cx="948" cy="190" rx="10" ry="14" fill="#40d0f0"/>
  <ellipse cx="918" cy="262" rx="9" ry="5" fill="#a0d020"/><ellipse cx="913" cy="261" rx="3.5" ry="5" fill="#e04010"/>
</g>
<g id="car2">
  <path d="M915.8,195.8 C925,190 935,187 944.2,187.1 L960,189.5 C966,191 970,194 974.2,197.4 L1001.1,225.8 C1012,231 1025,237 1032.7,243.2 C1035,247 1036,251 1035.9,254.2 L1036.6,271.6 L1029.5,274.8 L990,276 L966.4,268.5 L909.5,254.2 L907.9,216.3 Z" fill="url(#carSide2)" stroke="#0a1e3c" stroke-width="0.8"/>
  <path d="M915.8,195.8 C925,190 935,187 944.2,187.1 L960,189.5 C966,191 970,194 974.2,197.4 L969.5,199 L948.2,202.1 L918,197 Z" fill="#184890"/>
  <path d="M963.2,229.8 L1001.1,225.8 C1012,231 1025,237 1032.7,243.2 C1035,247 1036,251 1035.9,254.2 C1020,254 1000,252 985,248 C975,240 968,235 963.2,229.8 Z" fill="#1a52a8"/>
  <path d="M913.4,215.5 L918.2,197.4 L926,198.2 L923,218.7 Z" fill="url(#glass2)" stroke="#0a1e3c" stroke-width="0.6"/>
  <path d="M926.9,217.9 L930,199.7 L947.4,203.7 L960,227.4 Z" fill="url(#glass2)" stroke="#0a1e3c" stroke-width="0.6"/>
  <path d="M948.2,202.1 L969.5,199 L1001.1,225.8 L963.2,229.8 Z" fill="url(#glass2)" stroke="#0a1e3c" stroke-width="0.6"/>
  <path d="M923,219 L922,258" stroke="#0a1e3c" stroke-width="0.6" fill="none"/>
  <path d="M960,228 L959,266" stroke="#0a1e3c" stroke-width="0.6" fill="none"/>
  <path d="M966,252 C970,245 985,245 990,252 L990,276 L966,268 Z" fill="#0e3a80"/>
  <ellipse cx="979" cy="265.3" rx="11" ry="15.8" fill="#2a2a2a"/>
  <ellipse cx="979.5" cy="265.5" rx="7" ry="10.5" fill="#9c9c9c"/>
  <path d="M995,256 C994,252 998,250 1002,251.5 C1004,249.5 1008,250 1009,252 L1011,256 C1005,257.5 999,257.5 995,256 Z" fill="#f0f4f8" stroke="#0a1e3c" stroke-width="0.5"/>
  <path d="M1013.7,255 L1034.3,252.2 L1034.5,254.5 L1014,257.3 Z" fill="#141e30"/>
  <path d="M1013.7,265 L1035.9,263.8 L1035.9,267.5 L1013.7,268.5 Z" fill="#141e30"/>
  <ellipse cx="1008" cy="267" rx="2.5" ry="2.2" fill="#eef2f6"/>
</g>
</svg>

<div class="t" style="left:709.5px;top:52.78px;font-size:9.1px;color:#000;font-weight:bold;letter-spacing:0.3px;-webkit-text-stroke:0.25px #000;;transform-origin:0 0;transform:scaleX(1.1032)">0:beta.cas&nbsp; : Pressure&nbsp; : STATE 1,TIME 0.00E+00 at state:1</div>
<svg class="a" style="left:705px;top:75px" width="17" height="191" viewBox="705 75 17 191"><rect x="706" y="76.30" width="14" height="9.6" fill="#e40012"/><rect x="706" y="85.72" width="14" height="9.6" fill="#f04a12"/><rect x="706" y="85.32" width="14" height="0.8" fill="#000" opacity="0.35"/><rect x="706" y="95.14" width="14" height="9.6" fill="#f87412"/><rect x="706" y="94.74" width="14" height="0.8" fill="#000" opacity="0.35"/><rect x="706" y="104.56" width="14" height="9.6" fill="#f89412"/><rect x="706" y="104.16" width="14" height="0.8" fill="#000" opacity="0.35"/><rect x="706" y="113.98" width="14" height="9.6" fill="#f8b810"/><rect x="706" y="113.58" width="14" height="0.8" fill="#000" opacity="0.35"/><rect x="706" y="123.40" width="14" height="9.6" fill="#f8d808"/><rect x="706" y="123.00" width="14" height="0.8" fill="#000" opacity="0.35"/><rect x="706" y="132.82" width="14" height="9.6" fill="#f8f000"/><rect x="706" y="132.42" width="14" height="0.8" fill="#000" opacity="0.35"/><rect x="706" y="142.24" width="14" height="9.6" fill="#d4f010"/><rect x="706" y="141.84" width="14" height="0.8" fill="#000" opacity="0.35"/><rect x="706" y="151.66" width="14" height="9.6" fill="#ace818"/><rect x="706" y="151.26" width="14" height="0.8" fill="#000" opacity="0.35"/><rect x="706" y="161.08" width="14" height="9.6" fill="#80e018"/><rect x="706" y="160.68" width="14" height="0.8" fill="#000" opacity="0.35"/><rect x="706" y="170.50" width="14" height="9.6" fill="#18e010"/><rect x="706" y="170.10" width="14" height="0.8" fill="#000" opacity="0.35"/><rect x="706" y="179.92" width="14" height="9.6" fill="#10e070"/><rect x="706" y="179.52" width="14" height="0.8" fill="#000" opacity="0.35"/><rect x="706" y="189.34" width="14" height="9.6" fill="#10e0a8"/><rect x="706" y="188.94" width="14" height="0.8" fill="#000" opacity="0.35"/><rect x="706" y="198.76" width="14" height="9.6" fill="#10e0cc"/><rect x="706" y="198.36" width="14" height="0.8" fill="#000" opacity="0.35"/><rect x="706" y="208.18" width="14" height="9.6" fill="#00e4f0"/><rect x="706" y="207.78" width="14" height="0.8" fill="#000" opacity="0.35"/><rect x="706" y="217.60" width="14" height="9.6" fill="#10ccf0"/><rect x="706" y="217.20" width="14" height="0.8" fill="#000" opacity="0.35"/><rect x="706" y="227.02" width="14" height="9.6" fill="#14b0f0"/><rect x="706" y="226.62" width="14" height="0.8" fill="#000" opacity="0.35"/><rect x="706" y="236.44" width="14" height="9.6" fill="#1890e8"/><rect x="706" y="236.04" width="14" height="0.8" fill="#000" opacity="0.35"/><rect x="706" y="245.86" width="14" height="9.6" fill="#1c6ce0"/><rect x="706" y="245.46" width="14" height="0.8" fill="#000" opacity="0.35"/><rect x="706" y="255.28" width="14" height="9.6" fill="#0a10e0"/><rect x="706" y="254.88" width="14" height="0.8" fill="#000" opacity="0.35"/><rect x="706" y="76.3" width="14" height="188.4" fill="none" stroke="#000" stroke-width="0.6" opacity="0.5"/></svg>
<div class="t" style="left:722.5px;top:80.40px;font-size:10px;color:#000;font-weight:bold;letter-spacing:0.4px;-webkit-text-stroke:0.2px #000;">&gt;150</div>
<div class="t" style="left:728.6px;top:89.82px;font-size:10px;color:#000;font-weight:bold;letter-spacing:0.4px;-webkit-text-stroke:0.2px #000;">115.677</div>
<div class="t" style="left:728.6px;top:99.24px;font-size:10px;color:#000;font-weight:bold;letter-spacing:0.4px;-webkit-text-stroke:0.2px #000;">81.354</div>
<div class="t" style="left:728.6px;top:108.66px;font-size:10px;color:#000;font-weight:bold;letter-spacing:0.4px;-webkit-text-stroke:0.2px #000;">47.031</div>
<div class="t" style="left:728.6px;top:118.08px;font-size:10px;color:#000;font-weight:bold;letter-spacing:0.4px;-webkit-text-stroke:0.2px #000;">12.708</div>
<div class="t" style="left:728.6px;top:127.50px;font-size:10px;color:#000;font-weight:bold;letter-spacing:0.4px;-webkit-text-stroke:0.2px #000;">-21.615</div>
<div class="t" style="left:728.6px;top:136.92px;font-size:10px;color:#000;font-weight:bold;letter-spacing:0.4px;-webkit-text-stroke:0.2px #000;">-55.938</div>
<div class="t" style="left:728.6px;top:146.34px;font-size:10px;color:#000;font-weight:bold;letter-spacing:0.4px;-webkit-text-stroke:0.2px #000;">-90.261</div>
<div class="t" style="left:728.6px;top:155.76px;font-size:10px;color:#000;font-weight:bold;letter-spacing:0.4px;-webkit-text-stroke:0.2px #000;">-124.584</div>
<div class="t" style="left:728.6px;top:165.18px;font-size:10px;color:#000;font-weight:bold;letter-spacing:0.4px;-webkit-text-stroke:0.2px #000;">-158.907</div>
<div class="t" style="left:728.6px;top:174.60px;font-size:10px;color:#000;font-weight:bold;letter-spacing:0.4px;-webkit-text-stroke:0.2px #000;">-193.23</div>
<div class="t" style="left:728.6px;top:184.02px;font-size:10px;color:#000;font-weight:bold;letter-spacing:0.4px;-webkit-text-stroke:0.2px #000;">-227.553</div>
<div class="t" style="left:728.6px;top:193.44px;font-size:10px;color:#000;font-weight:bold;letter-spacing:0.4px;-webkit-text-stroke:0.2px #000;">-261.876</div>
<div class="t" style="left:728.6px;top:202.86px;font-size:10px;color:#000;font-weight:bold;letter-spacing:0.4px;-webkit-text-stroke:0.2px #000;">-296.199</div>
<div class="t" style="left:728.6px;top:212.28px;font-size:10px;color:#000;font-weight:bold;letter-spacing:0.4px;-webkit-text-stroke:0.2px #000;">-330.522</div>
<div class="t" style="left:728.6px;top:221.70px;font-size:10px;color:#000;font-weight:bold;letter-spacing:0.4px;-webkit-text-stroke:0.2px #000;">-364.845</div>
<div class="t" style="left:728.6px;top:231.12px;font-size:10px;color:#000;font-weight:bold;letter-spacing:0.4px;-webkit-text-stroke:0.2px #000;">-399.168</div>
<div class="t" style="left:728.6px;top:240.54px;font-size:10px;color:#000;font-weight:bold;letter-spacing:0.4px;-webkit-text-stroke:0.2px #000;">-433.491</div>
<div class="t" style="left:722.5px;top:249.96px;font-size:10px;color:#000;font-weight:bold;letter-spacing:0.4px;-webkit-text-stroke:0.2px #000;">&lt;-467.814</div>
<svg class="a" style="left:694px;top:286px" width="24" height="28" viewBox="694 286 24 28">
<path d="M709,296.3 V310" stroke="#2040b0" stroke-width="1.3"/>
<path d="M710.5,288.5 h4.5 l-4.5,6 h4.6" stroke="#2040b0" stroke-width="1.2" fill="none"/>
<path d="M708.5,309.5 L698,305" stroke="#40c040" stroke-width="1.6"/>
<path d="M699.5,301 l5,5.5 M704.5,301 l-5,5.5" stroke="#701818" stroke-width="1.1"/>
<path d="M708.5,310 L697.5,310.5" stroke="#40c040" stroke-width="1.5"/>
</svg>
<div class="a" style="left:679px;top:329px;width:432px;height:298px;background:#cfcfcf"></div>
<div class="a" style="left:679px;top:329px;width:431px;height:1px;background:#444"></div>
<div class="a" style="left:679px;top:330px;width:1px;height:297px;background:#f0f0f0"></div>
<div class="a" style="left:1109px;top:330px;width:1px;height:297px;background:#444"></div>
<div class="a" style="left:680px;top:330px;width:429px;height:1px;background:#e8e8e8"></div>
<div class="a" style="left:680px;top:331px;width:429px;height:11px;background:#000"></div>
<div class="t" style="left:692px;top:333.42px;font-size:8px;color:#dcdcdc;-webkit-text-stroke:0.12px #dcdcdc;">Window3</div>
<svg class="a" style="left:1081px;top:332px" width="28" height="10" viewBox="0 0 28 10"><rect x="0.5" y="0.5" width="7.5" height="8.5" fill="#d8d8d8" stroke="#555" stroke-width="0.8"/><rect x="2" y="6.5" width="4" height="1.5" fill="#000"/><rect x="9.5" y="0.5" width="7.5" height="8.5" fill="#d8d8d8" stroke="#555" stroke-width="0.8"/><rect x="11" y="2" width="4.5" height="5" fill="none" stroke="#000" stroke-width="1"/><rect x="11" y="2" width="4.5" height="1.3" fill="#000"/><rect x="18.5" y="0.5" width="8.5" height="8.5" fill="#d8d8d8" stroke="#555" stroke-width="0.8"/><path d="M20.5,2.5 L25,7 M25,2.5 L20.5,7" stroke="#000" stroke-width="1.1"/></svg>
<div class="a" style="left:680px;top:342px;width:429px;height:285px;background:#e3e3e3"></div>
<div class="a" style="left:681px;top:342px;width:1px;height:285px;background:#f4f4f4"></div>
<svg class="a" style="left:682px;top:342px" width="426" height="285" viewBox="682 342 426 285">
<rect x="720.3" y="358.9" width="384.0799999999999" height="238.5" fill="#fff"/>
<path d="M768.3,358.9V597.4 M816.3,358.9V597.4 M864.3,358.9V597.4 M912.3,358.9V597.4 M960.3,358.9V597.4 M1008.4,358.9V597.4 M1056.4,358.9V597.4 M720.3,385.4H1104.4 M720.3,411.9H1104.4 M720.3,438.4H1104.4 M720.3,464.9H1104.4 M720.3,491.4H1104.4 M720.3,517.9H1104.4 M720.3,544.4H1104.4 M720.3,570.9H1104.4" stroke="#b0b0b0" stroke-width="1" stroke-dasharray="1,2" fill="none"/>
<path d="M720.3,358.9H1104.4V597.4" stroke="#999" stroke-width="1" stroke-dasharray="1,1" fill="none"/>
<path d="M720.3,358.9V597.4H1104.4" stroke="#555" stroke-width="1.2" fill="none"/>
<path d="M720.3,597.4v-2.5 M744.3,597.4v-1.5 M768.3,597.4v-2.5 M792.3,597.4v-1.5 M816.3,597.4v-2.5 M840.3,597.4v-1.5 M864.3,597.4v-2.5 M888.3,597.4v-1.5 M912.3,597.4v-2.5 M936.3,597.4v-1.5 M960.3,597.4v-2.5 M984.4,597.4v-1.5 M1008.4,597.4v-2.5 M1032.4,597.4v-1.5 M1056.4,597.4v-2.5 M1080.4,597.4v-1.5 M1104.4,597.4v-2.5 M720.3,358.9h2.5 M720.3,372.1h1.5 M720.3,385.4h2.5 M720.3,398.6h1.5 M720.3,411.9h2.5 M720.3,425.1h1.5 M720.3,438.4h2.5 M720.3,451.6h1.5 M720.3,464.9h2.5 M720.3,478.1h1.5 M720.3,491.4h2.5 M720.3,504.6h1.5 M720.3,517.9h2.5 M720.3,531.1h1.5 M720.3,544.4h2.5 M720.3,557.6h1.5 M720.3,570.9h2.5 M720.3,584.1h1.5 M720.3,597.4h2.5" stroke="#555" stroke-width="1" fill="none"/>
<path d="M720.5,472.2 L727.2,466.3 L733.4,470.7 L740.1,473.3 L744.5,472.9 L751.9,468.5 L761.1,461.1 L770.3,450.1 L779.5,434.2 L786.9,419.5 L794.2,399.2 L799.8,380 L804.6,387.4 L810.8,410.3 L820,436.1 L829.3,454.5 L838.5,468.5 L847.7,481 L856.9,493.2 L866.1,506.1 L876.4,523.8 L881.6,530 L891.2,569.8 L896.3,573.1 L903,568 L906.4,563.7 L923,544.7 L935.8,539.4 L947.3,541.7 L963.9,552.4 L976.2,549.9 L986.9,522.2 L1002.3,473.7 L1008.7,467.3 L1020.2,459.6 L1027.8,448.6 L1038.1,433.3 L1053.4,443.5 L1065.7,464" stroke="#000" stroke-width="2.3" fill="none" stroke-linejoin="round"/>
<path d="M1054,444 L1066,464" stroke="#000" stroke-width="3" fill="none"/>
<text x="718" y="363.2" text-anchor="end" font-family="Liberation Sans" font-weight="bold" font-size="9.3" stroke="#000" stroke-width="0.35" textLength="16.2" lengthAdjust="spacingAndGlyphs">300</text>
<text x="718" y="389.7" text-anchor="end" font-family="Liberation Sans" font-weight="bold" font-size="9.3" stroke="#000" stroke-width="0.35" textLength="16.2" lengthAdjust="spacingAndGlyphs">200</text>
<text x="718" y="416.2" text-anchor="end" font-family="Liberation Sans" font-weight="bold" font-size="9.3" stroke="#000" stroke-width="0.35" textLength="16.2" lengthAdjust="spacingAndGlyphs">100</text>
<text x="718" y="442.7" text-anchor="end" font-family="Liberation Sans" font-weight="bold" font-size="9.3" stroke="#000" stroke-width="0.35" textLength="5.5" lengthAdjust="spacingAndGlyphs">0</text>
<text x="718" y="469.2" text-anchor="end" font-family="Liberation Sans" font-weight="bold" font-size="9.3" stroke="#000" stroke-width="0.35" textLength="19.9" lengthAdjust="spacingAndGlyphs">-100</text>
<text x="718" y="495.7" text-anchor="end" font-family="Liberation Sans" font-weight="bold" font-size="9.3" stroke="#000" stroke-width="0.35" textLength="19.9" lengthAdjust="spacingAndGlyphs">-200</text>
<text x="718" y="522.2" text-anchor="end" font-family="Liberation Sans" font-weight="bold" font-size="9.3" stroke="#000" stroke-width="0.35" textLength="19.9" lengthAdjust="spacingAndGlyphs">-300</text>
<text x="718" y="548.7" text-anchor="end" font-family="Liberation Sans" font-weight="bold" font-size="9.3" stroke="#000" stroke-width="0.35" textLength="19.9" lengthAdjust="spacingAndGlyphs">-400</text>
<text x="718" y="575.2" text-anchor="end" font-family="Liberation Sans" font-weight="bold" font-size="9.3" stroke="#000" stroke-width="0.35" textLength="19.9" lengthAdjust="spacingAndGlyphs">-500</text>
<text x="718" y="601.7" text-anchor="end" font-family="Liberation Sans" font-weight="bold" font-size="9.3" stroke="#000" stroke-width="0.35" textLength="19.9" lengthAdjust="spacingAndGlyphs">-600</text>
<text x="720.3" y="608.2" text-anchor="middle" font-family="Liberation Sans" font-weight="bold" font-size="9.3" stroke="#000" stroke-width="0.35" textLength="5.6" lengthAdjust="spacingAndGlyphs">0</text>
<text x="768.3" y="608.2" text-anchor="middle" font-family="Liberation Sans" font-weight="bold" font-size="9.3" stroke="#000" stroke-width="0.35" textLength="14.7" lengthAdjust="spacingAndGlyphs">0.5</text>
<text x="816.3" y="608.2" text-anchor="middle" font-family="Liberation Sans" font-weight="bold" font-size="9.3" stroke="#000" stroke-width="0.35" textLength="5.6" lengthAdjust="spacingAndGlyphs">1</text>
<text x="864.3" y="608.2" text-anchor="middle" font-family="Liberation Sans" font-weight="bold" font-size="9.3" stroke="#000" stroke-width="0.35" textLength="14.7" lengthAdjust="spacingAndGlyphs">1.5</text>
<text x="912.3" y="608.2" text-anchor="middle" font-family="Liberation Sans" font-weight="bold" font-size="9.3" stroke="#000" stroke-width="0.35" textLength="5.6" lengthAdjust="spacingAndGlyphs">2</text>
<text x="960.3" y="608.2" text-anchor="middle" font-family="Liberation Sans" font-weight="bold" font-size="9.3" stroke="#000" stroke-width="0.35" textLength="14.7" lengthAdjust="spacingAndGlyphs">2.5</text>
<text x="1008.4" y="608.2" text-anchor="middle" font-family="Liberation Sans" font-weight="bold" font-size="9.3" stroke="#000" stroke-width="0.35" textLength="5.6" lengthAdjust="spacingAndGlyphs">3</text>
<text x="1056.4" y="608.2" text-anchor="middle" font-family="Liberation Sans" font-weight="bold" font-size="9.3" stroke="#000" stroke-width="0.35" textLength="14.7" lengthAdjust="spacingAndGlyphs">3.5</text>
<text x="1104.4" y="608.2" text-anchor="middle" font-family="Liberation Sans" font-weight="bold" font-size="9.3" stroke="#000" stroke-width="0.35" textLength="5.6" lengthAdjust="spacingAndGlyphs">4</text>
<text x="912.3" y="357.8" text-anchor="middle" font-family="Liberation Sans" font-weight="bold" font-size="9.3" stroke="#000" stroke-width="0.35" textLength="62.9" lengthAdjust="spacingAndGlyphs">Model values</text>
<text x="912.3" y="621.3" text-anchor="middle" font-family="Liberation Sans" font-weight="bold" font-size="9.3" stroke="#000" stroke-width="0.35" textLength="48.2" lengthAdjust="spacingAndGlyphs">Xdistance</text>
<text transform="translate(694.3,480.2) rotate(-90)" text-anchor="middle" font-family="Liberation Sans" font-weight="bold" font-size="9.3" stroke="#000" stroke-width="0.35" textLength="164" lengthAdjust="spacingAndGlyphs">STATE 1 TIME 0.00E+00 at state:1</text>
</svg>
<div class="a" style="left:0px;top:626px;width:1111px;height:39px;background:#c4c4c4"></div>
<div class="a" style="left:0px;top:626px;width:1111px;height:1px;background:#2a2a2a"></div>
<div class="a" style="left:0px;top:627px;width:722px;height:19px;background:#cecece"></div>
<div class="a" style="left:0px;top:646px;width:1111px;height:19px;background:#c8c8c8"></div>
<div class="a" style="left:5px;top:631px;width:225px;height:14px;background:#fff;border-top:1px solid #333;border-left:1px solid #333"></div>
<svg class="a" style="left:9px;top:634px" width="10" height="9"><path d="M1,1 L5,4 L1,7" stroke="#000" stroke-width="1.1" fill="none"/><rect x="5" y="6.5" width="4" height="1.3" fill="#000"/></svg>
<div class="a" style="left:21px;top:633.5px;width:52px;height:10px;background:#000"></div>
<div class="t" style="left:22px;top:635.62px;font-size:8px;color:#fff;-webkit-text-stroke:0.12px #fff;">identify color</div>
<div class="a" style="left:222px;top:632px;width:8px;height:12px;background:#cfcfcf;border-right:1px solid #555;border-bottom:1px solid #555"></div>
<svg class="a" style="left:222px;top:635px" width="7" height="7"><path d="M1,2.5 L6,2.5 L3.5,5Z" fill="#000"/></svg>
<svg class="a" style="left:232px;top:632px" width="14" height="13"><circle cx="6.5" cy="6" r="4.5" fill="#5aa0e0" stroke="#a0c4f0" stroke-width="1"/><path d="M10,11 L12,11 L11,9.5Z" fill="#000"/></svg>
<div class="a" style="left:246px;top:627px;width:1px;height:19px;background:#8a8a8a"></div>
<div class="a" style="left:247px;top:627px;width:1px;height:19px;background:#f0f0f0"></div>
<svg class="a" style="left:250px;top:628px" width="250" height="18" viewBox="250 628 250 18">
<rect x="257" y="636" width="10" height="8" fill="#9a9a9a"/><path d="M259,636 V633 C259,630 265,630 265,633 V636" stroke="#9a9a9a" stroke-width="1.6" fill="none"/>
<path d="M271,637 L274,637 L272.5,639Z" fill="#aaa"/>
<circle cx="287" cy="637" r="3" fill="#9a9a9a"/><circle cx="282" cy="634" r="1.2" fill="#888"/><circle cx="291" cy="633" r="1.2" fill="#888"/><circle cx="282" cy="641" r="1.2" fill="#888"/><circle cx="290" cy="642" r="1.2" fill="#888"/>
<path d="M296,637 L299,637 L297.5,639Z" fill="#aaa"/>
<path d="M445,641 L448,638" stroke="#555" stroke-width="1.6"/><circle cx="451" cy="636" r="4.5" fill="#f4d8d8" stroke="#c05050" stroke-width="1"/><path d="M449,639 L451,633 L454,638" stroke="#d03030" stroke-width="1" fill="none"/>
<path d="M457,636 L461,636 L459,638.5Z" fill="#222"/>
<path d="M467,641 L470,638" stroke="#555" stroke-width="1.6"/><circle cx="474" cy="635.5" r="4.5" fill="#eee" stroke="#666" stroke-width="1"/><path d="M471,636 A3,3 0 1 1 476,638" stroke="#666" stroke-width="0.8" fill="none"/>
</svg>
<div class="a" style="left:301px;top:628px;width:1px;height:18px;background:#8a8a8a"></div>
<div class="a" style="left:302px;top:628px;width:1px;height:18px;background:#f0f0f0"></div>
<div class="t" style="left:310px;top:634.92px;font-size:8px;color:#111;font-weight:bold;">Or</div>
<div class="t" style="left:324px;top:634.92px;font-size:8px;color:#111;font-weight:bold;">Not</div>
<div class="t" style="left:341px;top:634.92px;font-size:8px;color:#b8b8b8;font-weight:bold;">And</div>
<div class="t" style="left:359px;top:634.92px;font-size:8px;color:#111;font-weight:bold;">Inv</div>
<div class="t" style="left:376px;top:634.92px;font-size:8px;color:#111;font-weight:bold;">All</div>
<div class="a" style="left:392px;top:628px;width:1px;height:18px;background:#a0a0a0"></div>
<div class="a" style="left:393px;top:628px;width:1px;height:18px;background:#f0f0f0"></div>
<div class="t" style="left:397px;top:634.92px;font-size:8px;color:#b8b8b8;font-weight:bold;">!Not !And</div>
<div class="a" style="left:436px;top:628px;width:1px;height:18px;background:#a0a0a0"></div>
<div class="a" style="left:437px;top:628px;width:1px;height:18px;background:#f0f0f0"></div>
<div class="a" style="left:483px;top:628px;width:1px;height:18px;background:#a0a0a0"></div>
<div class="a" style="left:484px;top:628px;width:1px;height:18px;background:#f0f0f0"></div>
<svg class="a" style="left:486px;top:628px" width="240" height="18" viewBox="486 628 240 18">
<g fill="none" stroke="#888" stroke-width="0.7">
<path d="M489,632 L499,630 L503,633 L503,642 L493,644 L489,641 Z M489,632 L493,635 L503,633 M493,635 L493,644 M491,637 L501,635 M491,639 L501,637 M496,631 L496,643"/>
<path d="M506,632 L516,630 L520,633 L520,642 L510,644 L506,641 Z M506,632 L510,635 L520,633 M510,635 L510,644"/>
</g>
<path d="M525,632 L531,630 L537,632 L537,641 L531,644 L525,641 Z" fill="#808080"/>
<path d="M542,632 L548,630 L554,632 L554,641 L548,644 L542,641 Z" fill="#808080"/>
<path d="M559,632 L566,630 L572,633 L570,642 L563,644 L559,640 Z" fill="#8a8a8a"/>
<path d="M581,633 L590,631 L593,636 L585,639 Z" fill="#c02020"/><rect x="586" y="639" width="7" height="5" fill="#333"/><circle cx="583" cy="640" r="2" fill="#666"/>
<path d="M602,633 C610,633 615,638 616,644" stroke="#5a8ac0" stroke-width="3.2" fill="none"/>
<path d="M620,636 L624,636 L622,638.5Z" fill="#222"/>
<rect x="630" y="630" width="5" height="14" fill="#8a8a8a"/><path d="M638,631 V644" stroke="#666" stroke-width="1" stroke-dasharray="1.5,1.5"/>
<rect x="652" y="633" width="7" height="8" fill="#4a7ad0"/><ellipse cx="660" cy="637" rx="3" ry="6" fill="none" stroke="#c060c0" stroke-width="1.2"/>
<path d="M667,636 L671,636 L669,638.5Z" fill="#222"/>
<ellipse cx="683" cy="640" rx="8" ry="3" fill="#2050d0"/><ellipse cx="683" cy="638" rx="5" ry="3" fill="#30c040"/><ellipse cx="683" cy="636" rx="2.5" ry="2" fill="#e03020"/>
<path d="M692,636 L696,636 L694,638.5Z" fill="#222"/>
<rect x="701" y="632" width="6" height="11" fill="#e8c040"/><circle cx="705" cy="637" r="2.5" fill="#3060c0"/><rect x="708" y="633" width="5" height="9" fill="#60c060"/>
<path d="M717,636 L721,636 L719,638.5Z" fill="#222"/>
</svg>
<div class="a" style="left:597px;top:628px;width:1px;height:18px;background:#a0a0a0"></div>
<div class="a" style="left:598px;top:628px;width:1px;height:18px;background:#f0f0f0"></div>
<div class="a" style="left:645px;top:628px;width:1px;height:18px;background:#a0a0a0"></div>
<div class="a" style="left:646px;top:628px;width:1px;height:18px;background:#f0f0f0"></div>
<div class="a" style="left:722px;top:627px;width:1px;height:19px;background:#a8a8a8"></div>
<div class="a" style="left:0px;top:645.5px;width:1111px;height:1px;background:#a8a8a8"></div>
<div class="a" style="left:0px;top:646.5px;width:1111px;height:1px;background:#e4e4e4"></div>
<svg class="a" style="left:0px;top:647px" width="490" height="18" viewBox="0 647 490 18">
<rect x="10" y="651" width="1.8" height="9" fill="#111"/><path d="M18,651 L12.5,655.5 L18,660Z" fill="#111"/>
<path d="M35,651 L28,655.5 L35,660Z" fill="#1a2ae0"/>
<circle cx="49" cy="655.5" r="3.6" fill="#e02020"/>
<rect x="63" y="652" width="7" height="7" fill="#111"/>
<path d="M81,651 L88,655.5 L81,660Z" fill="#1a2ae0"/>
<path d="M94,654.5 L98,654.5 L96,657Z" fill="#222"/>
<path d="M104,651 L109.5,655.5 L104,660Z" fill="#111"/><rect x="110" y="651" width="1.8" height="9" fill="#111"/>
<path d="M125,651 L119.5,655.5 L125,660Z M126,651 L131.5,655.5 L126,660Z" fill="#1a2ae0"/>
<path d="M136,658 h2 M139,658 h2 M142,658 h2" stroke="#888" stroke-width="0.8"/>
<rect x="146" y="649" width="2" height="5" fill="#000"/>
<path d="M146,657.5 H440" stroke="#2a2a2a" stroke-width="1.2"/>
<path d="M146,659 L148,661 L144,661Z" fill="#aaa"/>
<path d="M440,651 L444,651 L444,661 L440,661 L438,657Z" fill="#ccc" stroke="#333" stroke-width="0.8"/>
</svg>
<div class="a" style="left:445px;top:648px;width:32px;height:14px;background:#fff;border-top:1px solid #333;border-left:1px solid #333"></div>
<div class="a" style="left:469px;top:649px;width:8px;height:12px;background:#cfcfcf;border-right:1px solid #555;border-bottom:1px solid #555"></div>
<svg class="a" style="left:469px;top:652px" width="7" height="7"><path d="M1,2.5 L6,2.5 L3.5,5Z" fill="#000"/></svg>
<div class="a" style="left:483px;top:647px;width:1px;height:18px;background:#a0a0a0"></div>
<div class="a" style="left:484px;top:647px;width:1px;height:18px;background:#f0f0f0"></div>
<svg class="a" style="left:486px;top:647px" width="106" height="18" viewBox="486 647 106 18">
<rect x="489" y="649" width="13" height="14" rx="2" fill="#d8d8d8"/><text x="489" y="654" font-size="5" font-family="Liberation Sans" font-weight="bold">P</text><circle cx="494" cy="659" r="3" fill="#5a6ad0"/><rect x="497" y="651" width="4" height="8" fill="#e0c070"/>
<path d="M506,654.5 L510,654.5 L508,657Z" fill="#222"/>
<path d="M515,651 L521,649 L527,651 L527,659 L521,662 L515,659Z" fill="#1a8a6a"/><path d="M518,653 L524,652 L524,658 L518,659Z" fill="#30c040"/><circle cx="521" cy="655.5" r="1.6" fill="#2040c0"/>
<path d="M531,654.5 L535,654.5 L533,657Z" fill="#222"/>
<path d="M542,660 C543,655 546,651 547,650 C548,651 549,656 550,660Z" fill="#e8d0b0"/><rect x="539" y="661" width="13" height="1.5" fill="#e02020"/>
<path d="M556,654.5 L560,654.5 L558,657Z" fill="#222"/>
<rect x="562" y="650" width="14" height="12" fill="#b8e8f0"/><text x="563" y="657" font-size="5" font-family="Liberation Sans" font-weight="bold" fill="#222">50%</text>
<path d="M581,654.5 L585,654.5 L583,657Z" fill="#222"/>
</svg>
<div class="a" style="left:589px;top:647px;width:1px;height:18px;background:#a0a0a0"></div>
<div class="a" style="left:590px;top:647px;width:1px;height:18px;background:#f0f0f0"></div>
<div class="a" style="left:593px;top:648px;width:250px;height:14px;background:#fff;border-top:1px solid #333;border-left:1px solid #333"></div>
<div class="a" style="left:835px;top:649px;width:8px;height:12px;background:#cfcfcf;border-right:1px solid #555;border-bottom:1px solid #555"></div>
<svg class="a" style="left:835px;top:652px" width="7" height="7"><path d="M1,2.5 L6,2.5 L3.5,5Z" fill="#000"/></svg>
<div class="a" style="left:846px;top:648px;width:251px;height:14px;background:#fff;border-top:1px solid #333;border-left:1px solid #333"></div>
<svg class="a" style="left:849px;top:649px" width="13" height="12" viewBox="0 0 13 12"><rect width="13" height="12" fill="#f0e020"/><path d="M0,12 L0,4 C4,4 9,7 13,12Z" fill="#f08010"/><path d="M0,12 L0,7 C3,7 6,9 8,12Z" fill="#d01010"/><path d="M13,0 L13,8 C9,4 6,1 4,0Z" fill="#40b030"/></svg>
<div class="t" style="left:864px;top:652.49px;font-size:8.3px;color:#111;-webkit-text-stroke:0.12px #111;">TotalPressure</div>
<div class="a" style="left:1088px;top:649px;width:9px;height:12px;background:#cfcfcf;border-right:1px solid #555;border-bottom:1px solid #555"></div>
<svg class="a" style="left:1089px;top:652px" width="7" height="7"><path d="M1,2.5 L6,2.5 L3.5,5Z" fill="#000"/></svg>
<div class="a" style="left:1098px;top:649px;width:10px;height:13px;background:#c8c8c8;border-left:1px solid #eee"></div>
<div class="t" style="left:1099px;top:652.68px;font-size:7px;color:#888;-webkit-text-stroke:0.12px #888;">...</div>
</body></html>
